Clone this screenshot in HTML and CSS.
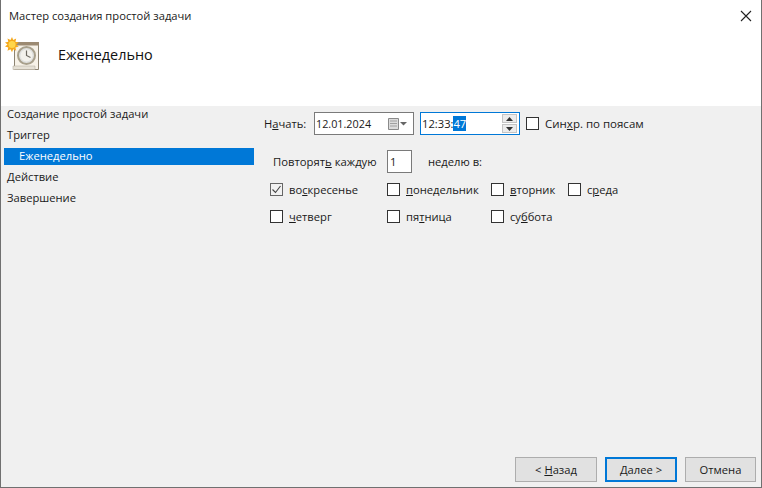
FILE: index.html
```html
<!DOCTYPE html>
<html lang="ru">
<head>
<meta charset="utf-8">
<title>Мастер создания простой задачи</title>
<link rel="stylesheet" href="styles.css">
</head>
<body>
<div class="window">
  <header class="top">
    <div class="titlebar">
      <span class="title">Мастер создания простой задачи</span>
      <svg class="close" width="12" height="12" viewBox="0 0 12 12"><path d="M1 1l10 10M11 1L1 11" stroke="#222" stroke-width="1.1" fill="none"/></svg>
    </div>
    <div class="banner">
      <svg class="wizard-icon" width="34" height="34" viewBox="0 0 34 34">
        <path d="M9.500 5.500h24v27h-24z" fill="#f7f2e8" stroke="#8d8472"/>
        <path d="M9 5h25v3.500H9z" fill="#9c8a72"/>
        <path d="M8 29h22v3.500H8z" fill="#e6e1d6" stroke="#b8b2a4" stroke-width=".6"/>
        <circle cx="21.500" cy="18.500" r="8.500" fill="#dfe0de" stroke="#a8a08c" stroke-width="2"/>
        <circle cx="21.500" cy="18.500" r="6" fill="#f3f2ec"/>
        <path d="M21.500 13.500v5l4 2" fill="none" stroke="#6d6a62" stroke-width="1.2"/>
        <path d="M7 0l1.200 3 3-1.500-.8 3.300 3.300.8-2.500 2 2.500 2-3.300.8.800 3.300-3-1.500-1.200 3-1.500-3-3 1.500.8-3.300L0 9.600l2.500-2L0 5.600l3.300-.8-.8-3.300 3 1.500z" fill="#f5a81c"/>
        <circle cx="7" cy="7.600" r="3.500" fill="#ffd64a"/>
      </svg>
      <span class="heading">Еженедельно</span>
    </div>
  </header>
  <main class="body">
    <nav class="steps">
      <div class="step">Создание простой задачи</div>
      <div class="step">Триггер</div>
      <div class="step step-active">Еженедельно</div>
      <div class="step">Действие</div>
      <div class="step">Завершение</div>
    </nav>
    <section class="form">
      <div class="row-start">
        <label class="start-label">Н<u>а</u>чать:</label>
        <div class="field date-field">
          <span class="value date-value">12.01.2024</span>
          <svg class="cal" width="19" height="13" viewBox="0 0 19 13">
            <path d="M.500 1.500h10v11H.500z" fill="#dcdcdc" stroke="#8a8a8a"/>
            <path d="M2 4h7M2 6.500h7M2 9h7" stroke="#a0a0a0"/>
            <path d="M12 5h7l-3.500 3.500z" fill="#666"/>
          </svg>
        </div>
        <div class="field time-field">
          <span class="value">12:33:<span class="selected">47</span></span>
          <div class="spin">
            <span class="spin-btn"><svg width="7" height="4" viewBox="0 0 7 4"><path d="M3.500 0L7 4H0z" fill="#333"/></svg></span>
            <span class="spin-btn"><svg width="7" height="4" viewBox="0 0 7 4"><path d="M0 0h7L3.500 4z" fill="#333"/></svg></span>
          </div>
        </div>
        <label class="check sync"><span class="box"></span><span>Син<u>х</u>р. по поясам</span></label>
      </div>
      <div class="row-repeat">
        <span class="repeat-label">Повторят<u>ь</u> каждую</span>
        <div class="field count-field"><span class="value">1</span></div>
        <span class="weeks-label">неделю в:</span>
      </div>
      <div class="days">
        <label class="check"><span class="box box-checked"><svg width="13" height="13" viewBox="0 0 13 13"><path d="M2.500 6.500l3 3 5-6.500" fill="none" stroke="#444" stroke-width="1.100"/></svg></span><span>во<u>с</u>кресенье</span></label>
        <label class="check"><span class="box"></span><span><u>п</u>онедельник</span></label>
        <label class="check"><span class="box"></span><span><u>в</u>торник</span></label>
        <label class="check"><span class="box"></span><span>с<u>р</u>еда</span></label>
        <label class="check"><span class="box"></span><span><u>ч</u>етверг</span></label>
        <label class="check"><span class="box"></span><span>пя<u>т</u>ница</span></label>
        <label class="check"><span class="box"></span><span>су<u>б</u>бота</span></label>
      </div>
    </section>
    <footer class="buttons">
      <button class="btn btn-back">&lt; <u>Н</u>азад</button>
      <button class="btn btn-next"><u>Д</u>алее &gt;</button>
      <button class="btn btn-cancel">Отмена</button>
    </footer>
  </main>
</div>
</body>
</html>
```
FILE: styles.css
```css
* { box-sizing: border-box; }
html, body { margin: 0; padding: 0; }
body {
  width: 762px;
  height: 488px;
  overflow: hidden;
  font-family: "Open Sans", "Noto Sans", sans-serif;
  font-size: 11.2px;
  color: #1a1a1a;
}
u { text-underline-offset: 1px; }
.window {
  width: 762px;
  height: 488px;
  display: flex;
  flex-direction: column;
  border: 1px solid #707070;
  border-top: 0;
  background: #fff;
}
.top { height: 106px; background: #fff; flex: none; }
.titlebar {
  height: 31px;
  padding: 0 9px 0 8px;
  display: flex;
  align-items: center;
  justify-content: space-between;
}
.banner {
  display: flex;
  align-items: center;
  height: 46px;
  padding-left: 4px;
}
.wizard-icon { flex: none; }
.heading { margin-left: 19px; font-size: 14.4px; color: #111; }
.body {
  position: relative;
  flex: 1;
  background: #f0f0f0;
  display: flex;
}
.steps {
  width: 253px;
  flex: none;
  padding: 0 0 0 3px;
  margin-top: -1px;
}
.step {
  height: 21px;
  padding: 0 0 0 3px;
  line-height: 18px;
  white-space: nowrap;
}
.step-active {
  height: 17px;
  margin: 1px 0 3px;
  line-height: 15px;
  padding-left: 15px;
  background: #0078d7;
  color: #fff;
}
.form { padding: 6px 0 0 10px; flex: 1; }
.row-start, .row-repeat { display: flex; align-items: center; }
.start-label { width: 50px; }
.field {
  display: flex;
  align-items: center;
  justify-content: space-between;
  background: #fff;
  border: 1px solid #7a7a7a;
}
.date-field { width: 100px; height: 23px; padding: 0 6px 0 1px; }
.value { margin-left: -1px; padding-left: 1px; }
.date-value { font-size: 10.8px; }
.time-field { width: 100px; height: 23px; margin-left: 6px; border-color: #0078d7; padding: 0 2px 0 1px; }
.selected { background: #0078d7; color: #fff; }
.spin { display: flex; flex-direction: column; gap: 1px; width: 15px; }
.spin-btn {
  height: 9px;
  background: #ececec;
  border: 1px solid #c4c4c4;
  display: flex;
  align-items: center;
  justify-content: center;
}
.check { display: flex; align-items: center; gap: 6px; white-space: nowrap; }
.box {
  width: 13px;
  height: 13px;
  flex: none;
  background: #fff;
  border: 1px solid #333;
  display: block;
}
.box svg { display: block; margin: -1px; }
.box-checked { background: #f2f2f2; border-color: #666; }
.sync { margin-left: 6px; font-size: 11.5px; }
.row-repeat { margin-top: 15px; padding-left: 9px; }
.repeat-label { width: 114px; font-size: 11.3px; white-space: nowrap; }
.count-field { width: 25px; height: 23px; padding-left: 2px; }
.weeks-label { margin-left: 16px; }
.days {
  display: grid;
  grid-template-columns: 117px 104px 77px auto;
  row-gap: 12px;
  margin-top: 9px;
  padding-left: 6px;
  justify-content: start;
}
.buttons {
  position: absolute;
  right: 5px;
  bottom: 5px;
  display: flex;
  gap: 8px;
}
.btn {
  height: 25px;
  font: inherit;
  color: #1a1a1a;
  background: #e1e1e1;
  border: 1px solid #adadad;
  padding: 0;
}
.btn-back { width: 82px; }
.btn-next { width: 72px; border: 2px solid #0078d7; }
.btn-cancel { width: 71px; }
```
